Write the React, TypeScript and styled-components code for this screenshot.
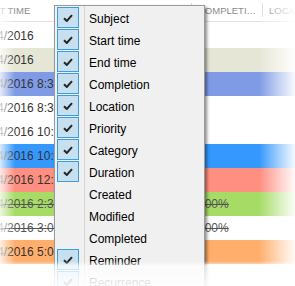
import React from "react";
import styled, { createGlobalStyle } from "styled-components";

const GlobalStyle = createGlobalStyle`
  html, body { margin: 0; padding: 0; background: #ffffff; overflow: hidden; }
  body { font-family: "Liberation Sans", Arial, sans-serif; }
`;

const Stage = styled.div`
  position: relative;
  width: 295px;
  height: 286px;
  overflow: hidden;
  background: #ffffff;
`;

const Grid = styled.div`
  display: flex;
  flex-direction: column;
  margin-left: -20px;
  width: 360px;
`;

const HeaderRow = styled.div`
  display: grid;
  grid-template-columns: 211px 71px 1fr;
  height: 21px;
  border-bottom: 1px solid #e2e2e2;
  align-items: center;
`;

const HeaderCell = styled.div<{ $divider?: boolean; $indent?: number }>`
  position: relative;
  padding: 0 4px 0 7px;
  font-size: 9.5px;
  color: #8a8a8a;
  text-transform: uppercase;
  white-space: nowrap;
  overflow: hidden;
  text-overflow: ellipsis;
  line-height: 21px;
  text-indent: ${(p) => p.$indent ?? 0}px;
  &::before {
    content: "";
    display: ${(p) => (p.$divider ? "block" : "none")};
    position: absolute;
    left: 0;
    top: 3px;
    bottom: 4px;
    width: 1px;
    background: #dcdcdc;
  }
`;

const Body = styled.div`
  padding-top: 2px;
  display: flex;
  flex-direction: column;
`;

const Row = styled.div<{ $bg: string }>`
  display: grid;
  grid-template-columns: 211px 71px 1fr;
  height: 24px;
  align-items: center;
  background: ${(p) => p.$bg};
`;

const Cell = styled.div<{ $strike?: boolean }>`
  padding: 0 7px;
  font-size: 12px;
  color: ${(p) => (p.$strike ? "#555555" : "#333333")};
  white-space: nowrap;
  overflow: hidden;
  text-decoration: ${(p) => (p.$strike ? "line-through" : "none")};
`;

const Menu = styled.div`
  position: absolute;
  left: 54px;
  top: 5px;
  width: 151px;
  height: 320px;
  background: #f0f0f0;
  border: 1px solid #9a9a9a;
  box-shadow: 2px 2px 3px rgba(0, 0, 0, 0.45);
  padding: 2px 0 0 2px;
  box-sizing: border-box;
  &::before {
    content: "";
    position: absolute;
    left: 29px;
    top: 0;
    bottom: 0;
    width: 1px;
    background: #d4d4d4;
  }
`;

const Item = styled.div`
  display: grid;
  grid-template-columns: 22px 10px 1fr;
  height: 22px;
  align-items: center;
  font-size: 12px;
  color: #000000;
`;

const CheckBox = styled.div<{ $on: boolean }>`
  grid-column: 1;
  width: 22px;
  height: 21px;
  margin-top: -1px;
  box-sizing: border-box;
  align-self: start;
  display: flex;
  align-items: center;
  justify-content: center;
  border: 1px solid ${(p) => (p.$on ? "#3a9de0" : "transparent")};
  background: ${(p) => (p.$on ? "#c6e0ef" : "transparent")};
`;

const Label = styled.span`
  grid-column: 3;
  white-space: nowrap;
`;

const Fade = styled.div`
  position: absolute;
  inset: 0;
  pointer-events: none;
  background:
    linear-gradient(to top, rgba(255,255,255,0.92) 0px, rgba(255,255,255,0.72) 20px, rgba(255,255,255,0) 25px),
    linear-gradient(to left, rgba(255,255,255,0.95) 0px, rgba(255,255,255,0.55) 16px, rgba(255,255,255,0) 36px),
    linear-gradient(to right, rgba(255,255,255,0.8) 0px, rgba(255,255,255,0) 15px);
`;

const Check = () => (
  <svg width="10" height="8" viewBox="0 0 10 8">
    <path d="M1 4.2 L3.8 7 L9 1.2" fill="none" stroke="#262626" strokeWidth="2" />
  </svg>
);

const rows: { bg: string; start: string; completion?: string; done?: boolean }[] = [
  { bg: "#ffffff", start: "1/4/2016" },
  { bg: "#e6e6d6", start: "1/4/2016" },
  { bg: "#7f9be6", start: "1/4/2016 8:30 AM" },
  { bg: "#ffffff", start: "1/4/2016 8:30 AM" },
  { bg: "#ffffff", start: "1/4/2016 10:00 AM" },
  { bg: "#3598fe", start: "1/4/2016 10:00 AM" },
  { bg: "#ff8f80", start: "1/4/2016 12:00 PM" },
  { bg: "#a6dc66", start: "1/4/2016 2:30 PM", completion: "100%", done: true },
  { bg: "#ffffff", start: "1/4/2016 3:00 PM", completion: "100%", done: true },
  { bg: "#ffae6c", start: "1/4/2016 5:00 PM" },
  { bg: "#ffffff", start: "" },
];

const items: [string, boolean][] = [
  ["Subject", true],
  ["Start time", true],
  ["End time", true],
  ["Completion", true],
  ["Location", true],
  ["Priority", true],
  ["Category", true],
  ["Duration", true],
  ["Created", false],
  ["Modified", false],
  ["Completed", false],
  ["Reminder", true],
  ["Recurrence", true],
];

export default function App() {
  return (
    <Stage>
      <GlobalStyle />
      <Grid>
        <HeaderRow>
          <HeaderCell $indent={-12}>Start time</HeaderCell>
          <HeaderCell $divider>Completion</HeaderCell>
          <HeaderCell $divider>Location</HeaderCell>
        </HeaderRow>
        <Body>
          {rows.map((r, i) => (
            <Row key={i} $bg={r.bg}>
              <Cell $strike={r.done}>{r.start}</Cell>
              <Cell $strike={r.done}>{r.completion ?? ""}</Cell>
              <Cell />
            </Row>
          ))}
        </Body>
      </Grid>
      <Menu>
        {items.map(([label, on]) => (
          <Item key={label}>
            <CheckBox $on={on}>{on && <Check />}</CheckBox>
            <Label>{label}</Label>
          </Item>
        ))}
      </Menu>
      <Fade />
    </Stage>
  );
}
